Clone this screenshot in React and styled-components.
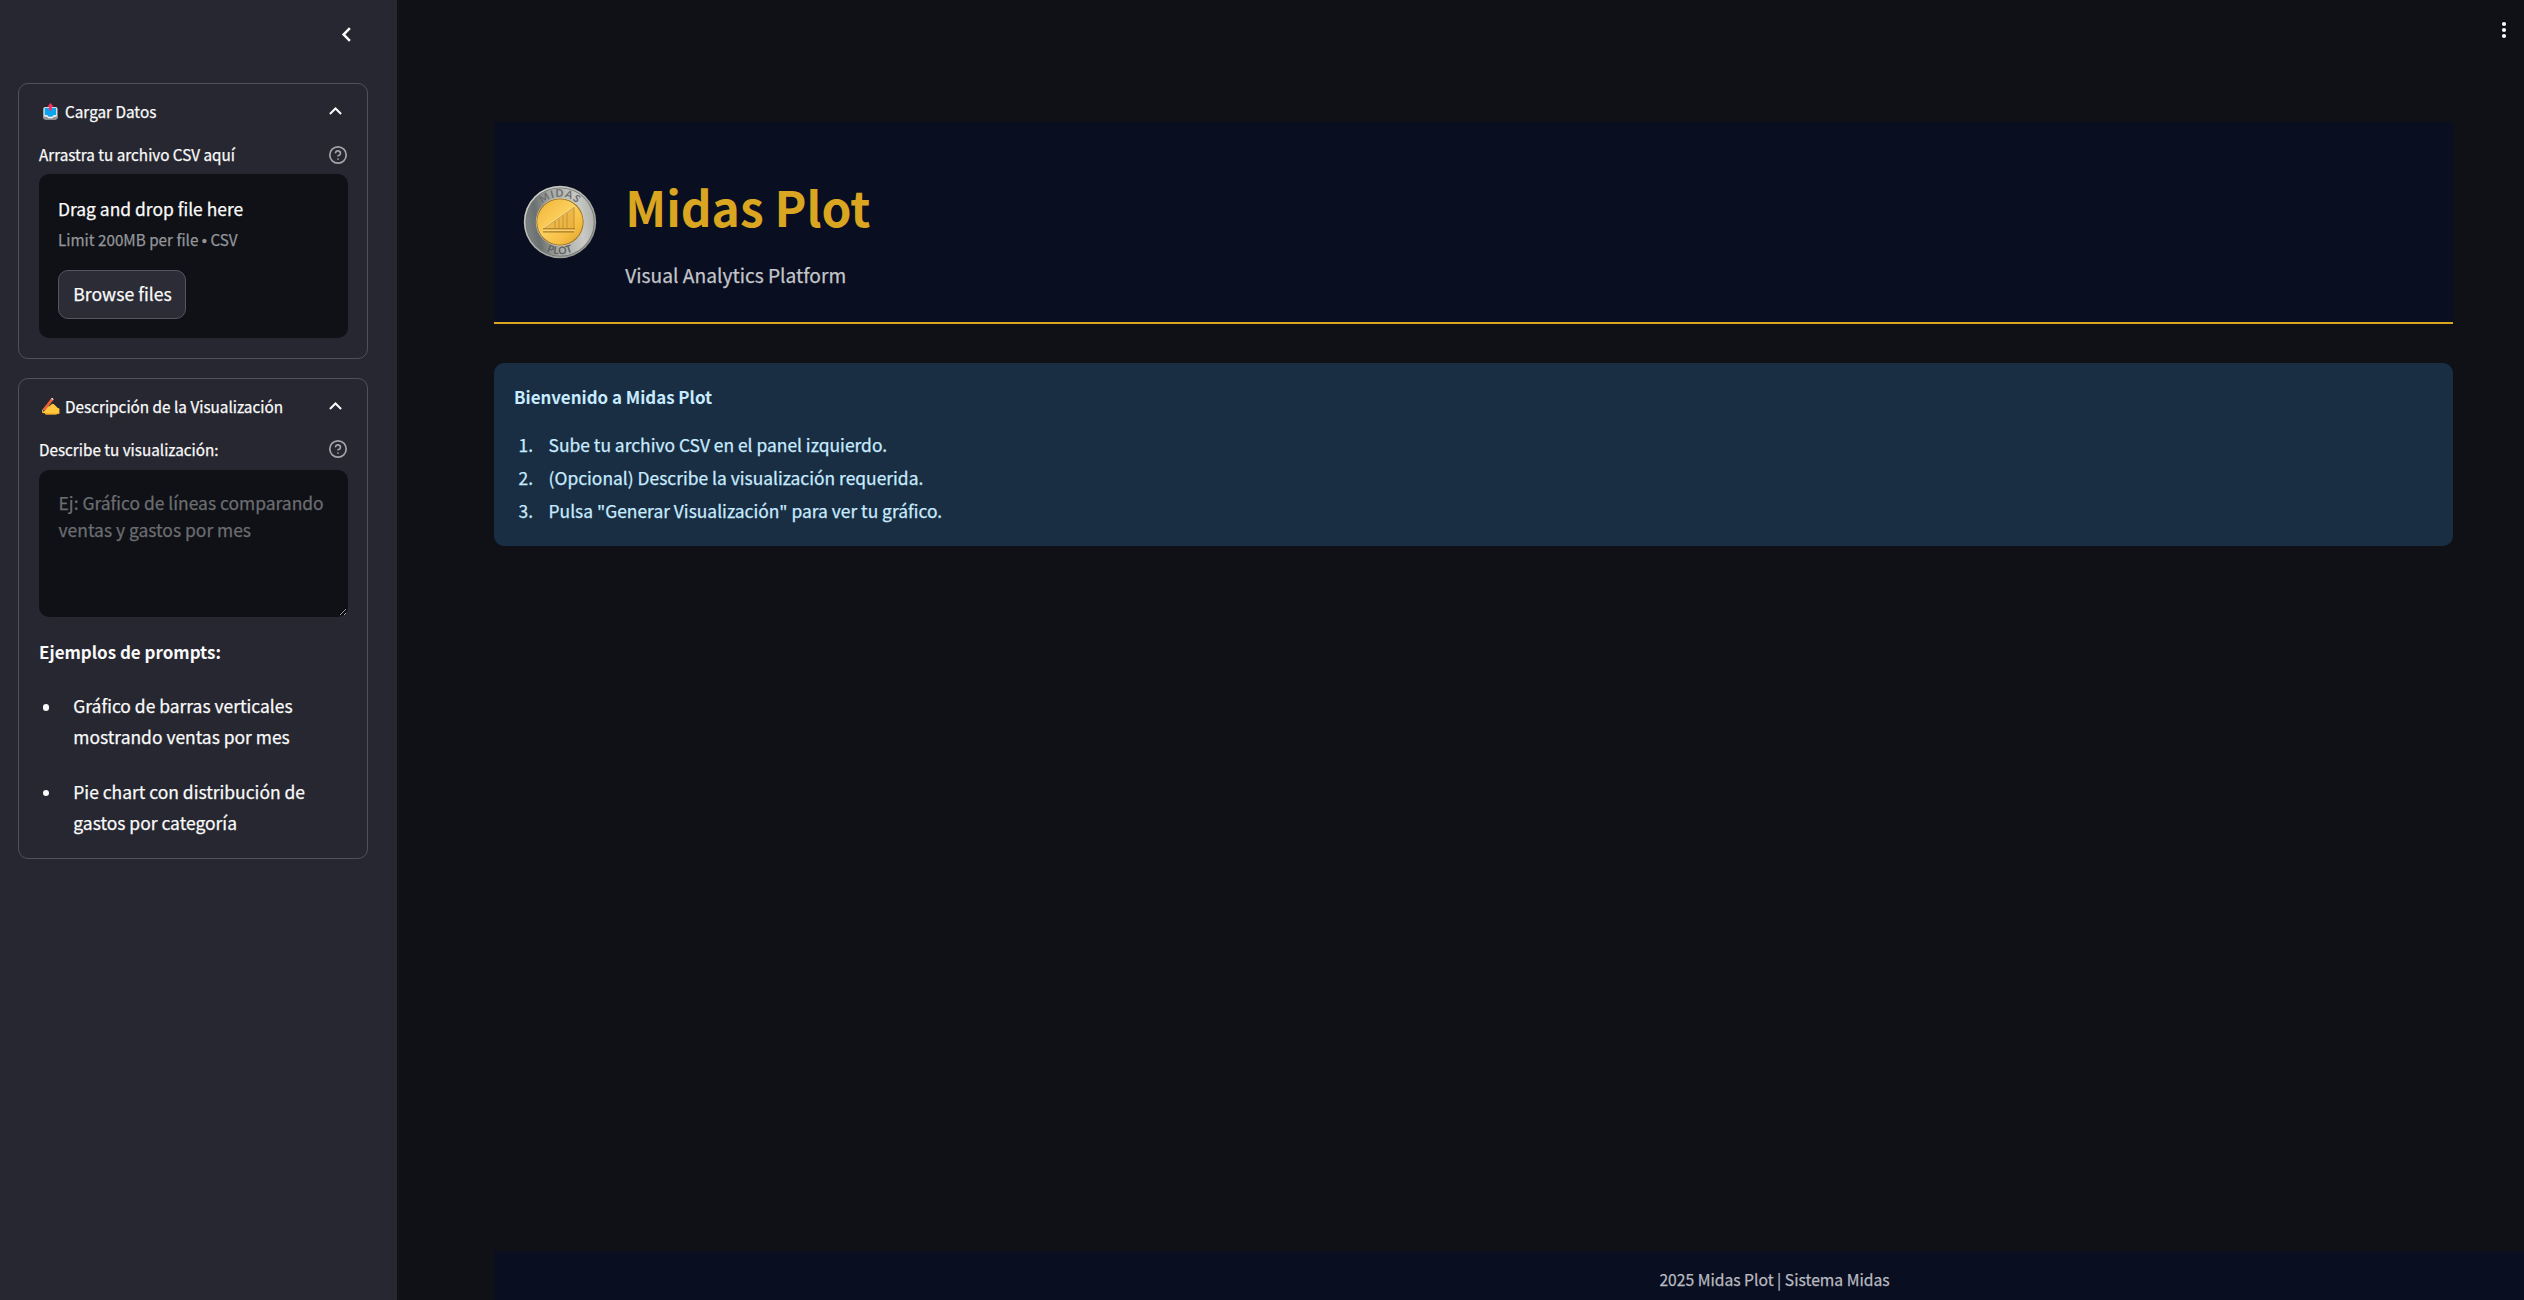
import React from "react";
import styled, { createGlobalStyle } from "styled-components";

const FONT = '"Noto Sans CJK SC", "Noto Sans", sans-serif';

const GlobalStyle = createGlobalStyle`
  *, *::before, *::after { box-sizing: border-box; }
  html { color-scheme: dark; }
  body {
    margin: 0;
    overflow: hidden;
    background: #0f1116;
    color: #fafafa;
    font-family: ${FONT};
    font-size: 17.5px;
    -webkit-text-stroke: 0.25px;
  }
  svg { -webkit-text-stroke: 0; flex-shrink: 0; }
`;

const Page = styled.div`
  display: flex;
  height: 1300px;
  overflow: hidden;
`;

/* ---------- Sidebar ---------- */

const Sidebar = styled.aside`
  flex: 0 0 397px;
  display: flex;
  flex-direction: column;
  padding: 0 29px 0 18px;
  background: #262730;
`;

const SidebarTop = styled.div`
  flex: 0 0 83px;
  display: flex;
  justify-content: flex-end;
  align-items: flex-start;
  padding: 27px 16px 0 0;
`;

const Cards = styled.div`
  display: flex;
  flex-direction: column;
  gap: 19px;
`;

const Card = styled.section`
  height: ${(p) => p.$height}px;
  border: 1px solid #50515a;
  border-radius: 10px;
`;

const CardHeader = styled.header`
  display: flex;
  align-items: center;
  height: 55px;
  padding: 0 25px 0 22px;
  font-size: 15.3px;
  line-height: 24px;
`;

const EmojiSlot = styled.span`
  display: flex;
  justify-content: center;
  width: 19px;
  margin-right: 5px;
`;

const CardTitle = styled.span`
  flex: 1;
  padding-bottom: 1.5px;
  white-space: nowrap;
`;

const CardBody = styled.div`
  padding: ${(p) => p.$top}px 19px 0 20px;
`;

const FieldLabel = styled.div`
  display: flex;
  justify-content: space-between;
  align-items: center;
  height: 24px;
  margin-bottom: ${(p) => p.$gap}px;
  font-size: 15.25px;
  line-height: 24px;
  white-space: nowrap;

  svg { margin-top: ${(p) => p.$drop || 0}px; }
`;

const DropZone = styled.div`
  height: 164px;
  padding: 20.4px 19px 0;
  border-radius: 10px;
  background: #0f1116;
`;

const DropTitle = styled.div`
  font-size: 17.45px;
  line-height: 30px;
`;

const DropHint = styled.div`
  margin-top: 3px;
  color: #94959a;
  font-size: 15.25px;
  line-height: 24px;
  white-space: nowrap;
`;

const Dot = styled.span`
  font-family: "Liberation Sans", sans-serif;
  font-size: 15px;
  line-height: 1;
`;

const BrowseButton = styled.button`
  display: flex;
  align-items: center;
  justify-content: center;
  width: 128px;
  height: 49px;
  margin: 18.6px 0 0;
  padding: 0 0 2px 1px;
  border: 1px solid #54555e;
  border-radius: 10px;
  background: #2b2c36;
  color: #fafafa;
  font: 17.6px ${FONT};
  -webkit-text-stroke: 0.25px;
`;

const PromptInput = styled.textarea`
  display: block;
  width: 309px;
  height: 147px;
  margin: 0;
  padding: 18px 16px 18px 18.6px;
  border: 1px solid transparent;
  border-radius: 10px;
  outline: none;
  background: #0f1116;
  color: #fafafa;
  font: 17.45px/27px ${FONT};
  -webkit-text-stroke: 0.25px;
  resize: vertical;
  overflow: hidden;

  &::placeholder { color: #6c6d71; opacity: 1; }
`;

const ExamplesTitle = styled.div`
  margin-top: 18.6px;
  font-size: 16.98px;
  font-weight: 700;
  line-height: 32px;
  -webkit-text-stroke: 0;
`;

const Examples = styled.ul`
  display: flex;
  flex-direction: column;
  gap: 22.8px;
  margin: 22.3px 0 0;
  padding: 0 0 0 4px;
  list-style: none;
`;

const Example = styled.li`
  display: flex;
  gap: 24px;
  font-size: 17.45px;
  line-height: 31.5px;

  &::before {
    content: "";
    flex: 0 0 6.3px;
    height: 6.3px;
    margin-top: 14.5px;
    border-radius: 50%;
    background: #fafafa;
  }
`;

/* ---------- Main ---------- */

const Main = styled.main`
  flex: 1;
  min-width: 0;
  display: flex;
  flex-direction: column;
  padding-left: 97px;
  overflow: hidden;
`;

const Toolbar = styled.div`
  flex: 0 0 122px;
  display: flex;
  justify-content: flex-end;
  padding: 20px 15px 0 0;
`;

const Banner = styled.header`
  display: flex;
  flex: 0 0 202px;
  width: 1959px;
  padding-left: 29px;
  border-bottom: 2px solid #daa520;
  background: #090e20;

  > svg { align-self: center; }
`;

const BannerText = styled.div`
  padding: 55.7px 0 0 28.3px;
`;

const Title = styled.h1`
  margin: 0;
  color: #daa520;
  font-size: 47.93px;
  font-weight: 700;
  line-height: 57.6px;
  -webkit-text-stroke: 0;
`;

const Subtitle = styled.p`
  margin: 24px 0 0;
  color: #c3c5ca;
  font-size: 19.2px;
  line-height: 33px;
`;

const Notice = styled.section`
  flex: 0 0 183px;
  width: 1959px;
  margin-top: 39px;
  padding: 17.6px 19px 0;
  border-radius: 10px;
  background: #1a2e43;
  color: #c7ebff;
`;

const NoticeTitle = styled.div`
  padding-left: 1px;
  font-size: 16.9px;
  font-weight: 700;
  line-height: 32px;
  -webkit-text-stroke: 0;
`;

const Steps = styled.ol`
  margin: 15.6px 0 0;
  padding: 0;
  list-style: none;
`;

const Step = styled.li`
  display: flex;
  gap: 15.6px;
  font-size: 17.42px;
  line-height: 33px;
`;

const StepNumber = styled.span`
  width: 20px;
  text-align: right;
`;

const Footer = styled.footer`
  flex: 0 0 49px;
  width: 2561px;
  margin-top: auto;
  padding-top: 14.7px;
  background: #090e20;
  color: #b9bbc0;
  font-size: 15.68px;
  line-height: 27px;
  text-align: center;
`;

/* ---------- Drawings ---------- */

const CollapseIcon = () => (
  <svg width="11" height="15" viewBox="0 0 11 15" fill="none">
    <path d="M8.9 1.2 2.6 7.5l6.3 6.3" stroke="#fafafa" strokeWidth="2.5" />
  </svg>
);

const ChevronIcon = styled.svg`
  margin-top: -1px;
`;

const ChevronUp = () => (
  <ChevronIcon width="13" height="8" viewBox="0 0 13 8" fill="none">
    <path d="M.9 7 6.5 1.5 12.1 7" stroke="#fafafa" strokeWidth="2" />
  </ChevronIcon>
);

const HelpIcon = () => (
  <svg width="20" height="20" viewBox="0 0 20 20" fill="none" stroke="#a3a4a9" strokeWidth="1.7" strokeLinecap="round" strokeLinejoin="round">
    <circle cx="10" cy="10" r="8.2" />
    <path d="M7.6 7.6a2.45 2.45 0 0 1 4.8.8c0 1.65-2.4 2.4-2.4 2.4" />
    <path d="M10 14.1h.01" />
  </svg>
);

const MenuDots = () => (
  <svg width="10" height="20" viewBox="0 0 10 20" fill="#fafafa">
    <circle cx="5" cy="4" r="2.1" />
    <circle cx="5" cy="10" r="2.1" />
    <circle cx="5" cy="16" r="2.1" />
  </svg>
);

const OutboxIcon = () => (
  <svg width="15" height="17" viewBox="0 0 15 17">
    <rect x="0.3" y="4" width="14.2" height="12.4" rx="1.8" fill="#d9dbde" />
    <path d="M.3 13h14.2v1.8c0 1-.7 1.7-1.7 1.7H2c-1 0-1.7-.7-1.7-1.7z" fill="#8f9296" />
    <path d="M1.8 5h11.2v7.2h-2.3l-1.4 1.6H5.5l-1.4-1.6H1.8z" fill="#0aa5f0" />
    <path d="M1.3 12.2h2.8l1.4 1.6h3.8l1.4-1.6h2.8v1.6H10.8L9.6 15.2H5.2L4 13.8H1.3z" fill="#f1f2f3" />
    <path d="M7.5 0 10.6 3.4H8.9V7.6H6.1V3.4H4.4z" fill="#f8315f" />
  </svg>
);

const WritingHandIcon = () => (
  <svg width="19" height="17" viewBox="0 0 19 17">
    <path d="M1.2 14.5c-.5-1.2 0-2.6 1.2-4l2.6-3.1c.7-.8 1.7-.6 2.1.2l.6 1.1 2.6-2.3c1-.9 2-.7 2.9.2l3.6 3.3 1.6.7v5.1l-1.7.3c-1.4.5-3.2.6-5 .5H5.5c-1.3 0-1.7-.7-1.6-1.5-1.1.5-2.2.4-2.7-.5z" fill="#ffc83d" />
    <path d="M4.1 14.6c2.2.9 5 .6 7.4.7 2.4 0 4.2-.3 6.7-1v1.3l-1.7.3c-1.4.5-3.2.6-5 .5H5.5c-1.3 0-1.7-.8-1.4-1.8z" fill="#f59f1f" opacity=".7" />
    <path d="M10 .6c.5-.6 1.3-.7 1.9-.2.6.5.7 1.2.2 1.9L4.6 12.1 1.9 14l.6-3.4z" fill="#ec6338" />
    <path d="m1.9 14 .5-2.6 1.4 1.2z" fill="#45434a" />
    <path d="m10 .6.6-.5c.8-.2 1.7.3 1.8 1.3l-.3.9z" fill="#d8dce2" />
  </svg>
);

const Coin = () => (
  <svg width="74" height="74" viewBox="0 0 74 74">
    <defs>
      <linearGradient id="rim" x1="0" y1="0.55" x2="1" y2="0.4">
        <stop offset="0" stopColor="#7d8382" />
        <stop offset="0.16" stopColor="#6a706f" />
        <stop offset="0.4" stopColor="#a4a7a4" />
        <stop offset="0.8" stopColor="#c9cac6" />
        <stop offset="1" stopColor="#b0b2ae" />
      </linearGradient>
      <linearGradient id="edge" x1="0" y1="0" x2="1" y2="1">
        <stop offset="0" stopColor="#d8d8d2" />
        <stop offset="0.5" stopColor="#b4b5b0" />
        <stop offset="1" stopColor="#85877f" />
      </linearGradient>
      <linearGradient id="gold" x1="0" y1="0" x2="1" y2="1">
        <stop offset="0" stopColor="#f0b336" />
        <stop offset="0.45" stopColor="#fbcf5c" />
        <stop offset="0.7" stopColor="#f6bf45" />
        <stop offset="1" stopColor="#e09f28" />
      </linearGradient>
      <path id="arcTop" d="M11.8 37a25.2 25.2 0 0 1 50.4 0" />
      <path id="arcTopLight" d="M12.4 37.7a25.2 25.2 0 0 1 50.4 0" />
      <path id="arcBottom" d="M4.8 37a32.2 32.2 0 0 0 64.4 0" />
      <path id="arcBottomLight" d="M5.4 37.7a32.2 32.2 0 0 0 64.4 0" />
    </defs>
    <circle cx="37" cy="37" r="36.2" fill="url(#edge)" />
    <circle cx="37" cy="37" r="34.6" fill="#747775" />
    <circle cx="37" cy="37" r="33.8" fill="url(#rim)" />
    <circle cx="37" cy="37" r="24.2" fill="#d8c9a0" />
    <circle cx="37" cy="37" r="23.6" fill="#8a6a2a" />
    <circle cx="37" cy="37" r="22.8" fill="url(#gold)" />
    <g fontFamily="Lato, sans-serif" fontWeight="700" fontSize="10.4" textAnchor="middle">
      <text fill="#6b6e6c" letterSpacing="1.1">
        <textPath href="#arcTop" startOffset="50%">MIDAS</textPath>
      </text>
      <text fill="#5e615f" letterSpacing="0.4">
        <textPath href="#arcBottom" startOffset="50%">PLOT</textPath>
      </text>
    </g>
    <path d="M21 43.5 51.5 21.8V43.5z" fill="#dfa435" opacity=".5" />
    <path d="M20.5 43.5 51.5 21.5" fill="none" stroke="#fbe29a" strokeWidth="1.2" />
    <path d="M20.5 44 51 22.3V43.5" fill="none" stroke="#b98730" strokeWidth=".7" />
    <path d="M32 36v7.5M36 33.5v10M40 30.5v13M44 28v15.5" stroke="#bf8c30" strokeWidth=".8" />
    <path d="M20 43.9h32M20 46.9h31" stroke="#94681f" strokeWidth="1" />
    <path d="M20 45.2h32" stroke="#ffe08a" strokeWidth=".8" />
  </svg>
);

/* ---------- App ---------- */

const examples = [
  ["Gráfico de barras verticales", "mostrando ventas por mes"],
  ["Pie chart con distribución de", "gastos por categoría"],
];

const steps = [
  "Sube tu archivo CSV en el panel izquierdo.",
  "(Opcional) Describe la visualización requerida.",
  'Pulsa "Generar Visualización" para ver tu gráfico.',
];

export default function App() {
  return (
    <Page>
      <GlobalStyle />
      <Sidebar>
        <SidebarTop>
          <CollapseIcon />
        </SidebarTop>
        <Cards>
          <Card $height={276}>
            <CardHeader>
              <EmojiSlot><OutboxIcon /></EmojiSlot>
              <CardTitle>Cargar Datos</CardTitle>
              <ChevronUp />
            </CardHeader>
            <CardBody $top={2.8}>
              <FieldLabel $gap={8.2} $drop={2}>
                Arrastra tu archivo CSV aquí
                <HelpIcon />
              </FieldLabel>
              <DropZone>
                <DropTitle>Drag and drop file here</DropTitle>
                <DropHint>Limit 200MB per file <Dot>•</Dot> CSV</DropHint>
                <BrowseButton type="button">Browse files</BrowseButton>
              </DropZone>
            </CardBody>
          </Card>
          <Card $height={481}>
            <CardHeader>
              <EmojiSlot><WritingHandIcon /></EmojiSlot>
              <CardTitle>Descripción de la Visualización</CardTitle>
              <ChevronUp />
            </CardHeader>
            <CardBody $top={3.2}>
              <FieldLabel $gap={8.8}>
                Describe tu visualización:
                <HelpIcon />
              </FieldLabel>
              <PromptInput placeholder="Ej: Gráfico de líneas comparando ventas y gastos por mes" />
              <ExamplesTitle>Ejemplos de prompts:</ExamplesTitle>
              <Examples>
                {examples.map(([first, second]) => (
                  <Example key={first}>
                    <span>{first}<br />{second}</span>
                  </Example>
                ))}
              </Examples>
            </CardBody>
          </Card>
        </Cards>
      </Sidebar>
      <Main>
        <Toolbar>
          <MenuDots />
        </Toolbar>
        <Banner>
          <Coin />
          <BannerText>
            <Title>Midas Plot</Title>
            <Subtitle>Visual Analytics Platform</Subtitle>
          </BannerText>
        </Banner>
        <Notice>
          <NoticeTitle>Bienvenido a Midas Plot</NoticeTitle>
          <Steps>
            {steps.map((step, i) => (
              <Step key={step}>
                <StepNumber>{i + 1}.</StepNumber>
                <span>{step}</span>
              </Step>
            ))}
          </Steps>
        </Notice>
        <Footer>2025 Midas Plot | Sistema Midas</Footer>
      </Main>
    </Page>
  );
}
